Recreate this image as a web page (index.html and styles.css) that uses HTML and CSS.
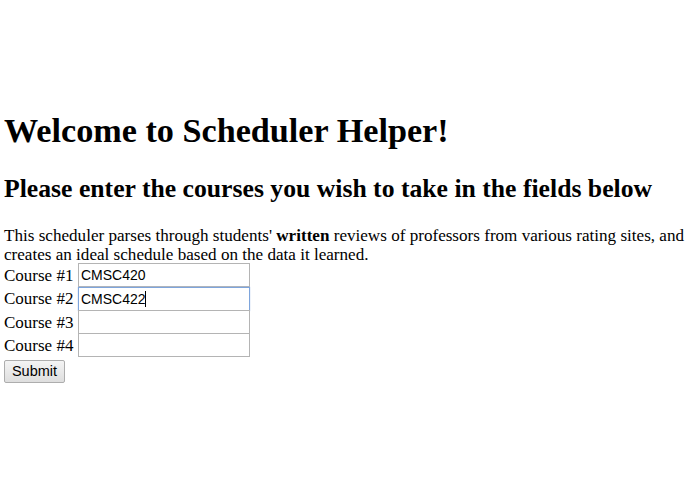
FILE: index.html
```html
<!DOCTYPE html>
<html>
<head>
<meta charset="utf-8">
<link rel="stylesheet" href="styles.css">
</head>
<body>
<div class="page">
<h1 class="title">Welcome to Scheduler Helper!</h1>
<h2 class="subtitle">Please enter the courses you wish to take in the fields below</h2>
<p class="intro">This scheduler parses through students' <b>written</b> reviews of professors from various rating sites, and creates an ideal schedule based on the data it learned.</p>
<form class="form">
<div class="row"><label class="lbl">Course #1</label><input class="field" type="text" value="CMSC420"></div>
<div class="row"><label class="lbl">Course #2</label><input class="field focus" type="text" value="CMSC422"><span class="caret"></span></div>
<div class="row"><label class="lbl">Course #3</label><input class="field" type="text"></div>
<div class="row"><label class="lbl">Course #4</label><input class="field" type="text"></div>
<button class="submit" type="button">Submit</button>
</form>
</div>
</body>
</html>
```
FILE: styles.css
```css
html, body { margin: 0; padding: 0; background: #fff; }
.page {
  padding: 111px 4px 0 4px;
  font-family: "Liberation Serif", "Times New Roman", serif;
  color: #000;
}
.title { font-size: 34.2px; font-weight: bold; margin: 0 0 23.4px 0; line-height: 40px; }
.subtitle { font-size: 25.7px; font-weight: bold; margin: 0 0 21.4px 0; line-height: 30px; }
.intro { font-size: 17.1px; margin: 0; line-height: 19px; }
.form { margin: 0; font-size: 17px; }
.row { display: flex; align-items: center; height: 23.33px; position: relative; }
.lbl { width: 74px; line-height: 19px; }
.field {
  box-sizing: border-box;
  width: 172px; height: 24px;
  border: 1px solid #b4b4b4;
  padding: 1px 2px;
  font-family: "Liberation Sans", Arial, sans-serif;
  font-size: 14px;
  color: #000;
  outline: none;
  margin: 0;
}
.field.focus { border: 1px solid #7ea5dc; box-shadow: 0 0 1px #9ab8e4; }
.caret { position: absolute; left: 141px; top: 4px; width: 1px; height: 16px; background: #000; }
.submit {
  margin-top: 2.5px;
  box-sizing: border-box;
  width: 61px; height: 23px;
  font-family: "Liberation Sans", Arial, sans-serif;
  font-size: 14.5px;
  border: 1px solid #adadad;
  border-radius: 2px;
  background: linear-gradient(#f4f4f4, #dedede);
  padding: 0;
  color: #000;
}
```
